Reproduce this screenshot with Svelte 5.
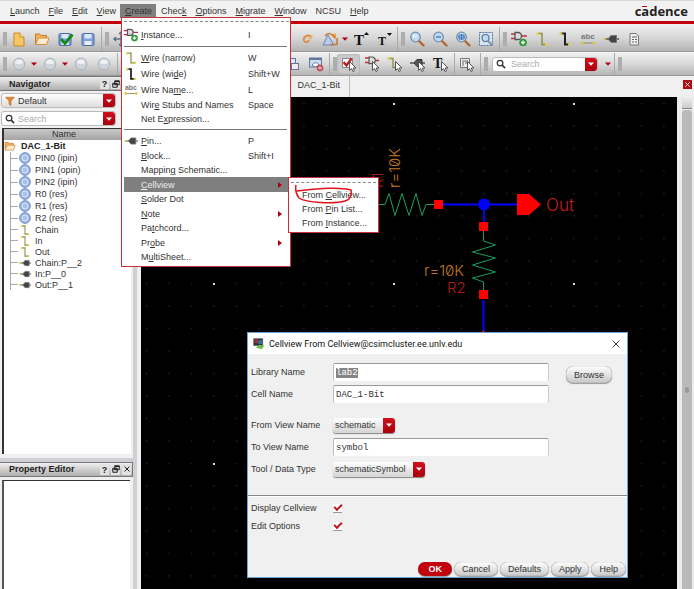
<script lang="ts">
  import { onMount } from "svelte";

  // "_" marks the mnemonic letter of an entry.
  const menubar = [
    "_Launch", "_File", "_Edit", "_View", "_Create", "Chec_k",
    "_Options", "_Migrate", "_Window", "NCSU", "_Help",
  ];

  const createMenu = [
    { label: "_Instance...", key: "I", icon: "instance" },
    { divider: true },
    { label: "_Wire (narrow)", key: "W", icon: "wire" },
    { label: "Wire (wi_de)", key: "Shift+W", icon: "wirewide" },
    { label: "Wire Na_me...", key: "L", icon: "abc" },
    { label: "Wir_e Stubs and Names", key: "Space" },
    { label: "Net E_xpression..." },
    { divider: true },
    { label: "_Pin...", key: "P", icon: "pin" },
    { label: "_Block...", key: "Shift+I" },
    { label: "Mappin_g Schematic..." },
    { label: "_Cellview", arrow: true, open: true },
    { label: "_Solder Dot" },
    { label: "_Note", arrow: true },
    { label: "Pa_tchcord..." },
    { label: "Pr_obe", arrow: true },
    { label: "M_ultiSheet..." },
  ];

  const cellviewMenu = ["From _Cellview...", "From _Pin List...", "From _Instance..."];

  const mainTools = [
    "grip", "new", "open", "check", "save", "end",
    "grip", "move", "covered",
    "undo", "rotate", "drop", "bigger", "smaller", "end",
    "grip", "zoomin", "zoomout", "zoomfit", "zoomsel", "end",
    "grip", "instance", "wire", "wirewide", "abc", "pin", "sheet",
  ];

  const selectTools = [
    "grip", "ball", "drop", "ball", "drop", "ball", "ball", "end", "covered",
    "copywin", "hide", "end",
    "grip", "selcheck", "selinst", "selwire", "selpin", "seltext", "end",
    "selsheet", "end", "grip",
  ];

  const tree = [
    { name: "PIN0 (ipin)", icon: "cell" },
    { name: "PIN1 (opin)", icon: "cell" },
    { name: "PIN2 (ipin)", icon: "cell" },
    { name: "R0 (res)", icon: "cell" },
    { name: "R1 (res)", icon: "cell" },
    { name: "R2 (res)", icon: "cell" },
    { name: "Chain", icon: "wire" },
    { name: "In", icon: "wire" },
    { name: "Out", icon: "wire" },
    { name: "Chain:P__2", icon: "pin" },
    { name: "In:P__0", icon: "pin" },
    { name: "Out:P__1", icon: "pin" },
  ];

  let library = $state("lab2");
  let cell = $state("DAC_1-Bit");
  let toView = $state("symbol");
  let display = $state(true);
  let edit = $state(true);
  let libraryInput: HTMLInputElement;

  onMount(() => {
    libraryInput.focus({ preventScroll: true });
    libraryInput.select();
  });
</script>

{#snippet mnemonic(text)}
  {@const at = text.indexOf("_")}
  {#if at < 0}<span>{text}</span>{:else}<span>{text.slice(0, at)}<u>{text[at + 1]}</u>{text.slice(at + 2)}</span>{/if}
{/snippet}

{#snippet cursor()}
  <path d="M8.500 5.500v9l2-2 1.500 3 1.500-.8-1.400-2.700h2.900z" fill="#fff" stroke="#444" stroke-width=".9" />
{/snippet}

{#snippet lens()}
  <path d="M10 10l4.500 4.500" stroke="#b5652a" stroke-width="2.400" stroke-linecap="round" />
  <circle cx="6.500" cy="6" r="4.800" fill="#bcdcf5" stroke="#7c8ea3" stroke-width="1.300" />
{/snippet}

{#snippet icon(name)}
  <svg class="icon" viewBox="0 0 16 16" aria-hidden="true">
    {#if name === "new"}
      <path d="M3 2h6l4 4v9H3z" fill="#f7c667" stroke="#c98a22" />
      <path d="M9 2v4h4" fill="#fff0c4" stroke="#c98a22" />
    {:else if name === "open"}
      <path d="M1.500 13V3h4l1.500 1.500h5.500V7" fill="#f2b35c" stroke="#c47a22" />
      <path d="M1.500 13.500L4.500 7H15l-2.500 6.500z" fill="#fdebcf" stroke="#d58f38" />
    {:else if name === "save" || name === "check"}
      <rect x="2" y="2.500" width="12" height="12" rx="1.500" fill="#7d9fd6" stroke="#4c6aa5" />
      <rect x="4.500" y="3" width="7" height="4.500" fill="#dce8fa" />
      <rect x="4.500" y="10" width="7" height="4" fill="#e9eef5" />
      {#if name === "check"}
        <path d="M4 8l4 4.500 7.500-9" fill="none" stroke="#148a22" stroke-width="2.800" />
      {/if}
    {:else if name === "move"}
      <path d="M8 1v14M1 8h14M6 3l2-2 2 2M6 13l2 2 2-2M3 6L1 8l2 2M13 6l2 2-2 2" fill="none" stroke="#5c6f8c" stroke-width="1.400" />
    {:else if name === "undo"}
      <path d="M12 5C8 3.500 4 6 5 9.500c1 2.500 5 2 4.500-.5" fill="none" stroke="#dc8f48" stroke-width="2" />
      <path d="M9 7l5-3-2 5z" fill="#efb06a" />
    {:else if name === "rotate"}
      <path d="M1 14L6 4l6 10z" fill="#b9cdeb" stroke="#6a86b5" />
      <path d="M8 3.500l6-1v6" fill="#f0a23c" />
      <path d="M3 5c3-4 7-3 10 2M15 7v6.500H8" fill="none" stroke="#c77a3c" stroke-width="1.500" />
    {:else if name === "bigger"}
      <path d="M11 4l2.500-3L16 4z" fill="#111" />
      <text x="1" y="14" font-size="15">T</text>
    {:else if name === "smaller"}
      <path d="M11 2h5l-2.500 3z" fill="#111" />
      <text x="2" y="14" font-size="12">T</text>
    {:else if name === "zoomin"}
      {@render lens()}
      <path d="M4 5h4M5 3l-1 2 1 2" fill="none" stroke="#fff" />
    {:else if name === "zoomout"}
      {@render lens()}
      <path d="M4 6h5" stroke="#4b7cb8" stroke-width="1.400" />
    {:else if name === "zoomfit"}
      {@render lens()}
      <path d="M4 4h5v4H4zM6.500 3v6M3 6h7" fill="none" stroke="#3c75b8" />
    {:else if name === "zoomsel"}
      <rect x="1.500" y="1.500" width="13" height="13" fill="#d6e4f2" stroke="#51729a" stroke-dasharray="2 1" />
      <circle cx="7.500" cy="7" r="3.500" fill="#bcdcf5" stroke="#5b7593" stroke-width="1.200" />
      <path d="M10 10l4 4" stroke="#7c8fa8" stroke-width="2" />
    {:else if name === "instance"}
      <path d="M0 3h4M0 7.500h4M9 5h7" stroke="#c0303c" stroke-width="1.500" />
      <path d="M4 1.500h3a3.500 3.500 0 010 7H4z" fill="#ddd" stroke="#555" stroke-width="1.300" />
      <circle cx="12" cy="11.500" r="3.800" fill="#2d9a38" />
      <path d="M10 11.500h4M12 9.500v4" stroke="#fff" stroke-width="1.400" />
    {:else if name === "wire" || name === "wirewide"}
      <path d="M4 2.500h4v11h4" fill="none" stroke={name === "wire" ? "#8c8c42" : "#222"} stroke-width={name === "wire" ? 1.400 : 2} />
      <circle cx="3.800" cy="2.700" r="1.500" fill="#e0d050" />
      <circle cx="12.400" cy="13.400" r="1.500" fill="#e0d050" />
    {:else if name === "abc"}
      <text class="abc" x="1" y="8" font-size="8">abc</text>
      <path d="M2 12h12" stroke="#8c8c62" />
      <circle cx="2" cy="12" r="1.600" fill="#dccb4a" />
      <circle cx="14" cy="12" r="1.600" fill="#dccb4a" />
    {:else if name === "pin"}
      <path d="M1 8h5M13 8h3" stroke="#555" stroke-width="1.400" />
      <path d="M5 8l3-3.500h5.500v7H8z" fill="#444" stroke="#777" />
      <circle cx="1.800" cy="8" r="1.300" fill="#d8ca4c" />
    {:else if name === "sheet"}
      <path d="M4 2.500h6l2.500 2.500v9H4z" fill="#eee" stroke="#777" />
      <path d="M6 6h5M6 8.500h2M9 8.500h2M6 11h2M9 11h2" stroke="#666" />
    {:else if name === "ball"}
      <circle cx="8" cy="8" r="5.800" fill="#cfd3da" stroke="#aeb2ba" />
      <path d="M4 7a4 3.500 0 018 0c-2 1.500-6 1.500-8 0z" fill="#eff1f5" />
    {:else if name === "cell"}
      <circle cx="8" cy="8" r="7.300" fill="#8ba8dc" stroke="#6f8cc4" />
      <circle cx="8" cy="8" r="4.200" fill="#a9c0ea" stroke="#e6eefb" stroke-width="1.300" />
    {:else if name === "copywin"}
      <rect x="1.500" y="2.500" width="9" height="8" fill="#dde7f5" stroke="#60779c" />
      <rect x="6.500" y="7.500" width="7" height="6" fill="#eee" stroke="#60779c" />
    {:else if name === "hide"}
      <rect x="1.500" y="2" width="12" height="9" fill="#cddcf0" stroke="#60779c" />
      <path d="M1.500 3h12" stroke="#60779c" stroke-width="2" />
      <path d="M4 9c2-3 5-3 7 0-2 2-5 2-7 0z" fill="#fff" stroke="#60779c" />
      <circle cx="12" cy="12" r="3" fill="#d0636b" stroke="#b8454e" />
      <path d="M10.500 12h3" stroke="#fff" />
    {:else if name === "selcheck"}
      <rect x="1.500" y="2.500" width="10" height="9" fill="#fff" stroke="#888" />
      <path d="M2.500 6l3 3.500 5-7" fill="none" stroke="#c4101c" stroke-width="2.200" />
      {@render cursor()}
    {:else if name === "selinst"}
      <path d="M1 2h4M1 6.500h4M10 4.500h5" stroke="#c52a35" stroke-width="1.300" />
      <path d="M5 1h3a3.300 3.300 0 010 6.600H5z" fill="#ddd" stroke="#555" stroke-width="1.200" />
      {@render cursor()}
    {:else if name === "selwire"}
      <path d="M1 2.500h5v9h3" fill="none" stroke="#8c8c42" stroke-width="1.300" />
      <circle cx="1.800" cy="2.500" r="1.400" fill="#e0d050" />
      {@render cursor()}
    {:else if name === "selpin"}
      <path d="M0 7h5M12 7h3" stroke="#555" stroke-width="1.300" />
      <path d="M4 7l3-3.500h5v7H7z" fill="#555" stroke="#333" />
      {@render cursor()}
    {:else if name === "seltext"}
      <text x="0" y="12" font-size="14">T</text>
      {@render cursor()}
    {:else if name === "selsheet"}
      <path d="M1.500 2.500h9v9h-9z" fill="#eee" stroke="#777" />
      <path d="M3 5h6M3 7h2M6 7h3M3 9h2" stroke="#666" />
      {@render cursor()}
    {:else if name === "lens"}
      <circle cx="6.500" cy="6.500" r="4.500" fill="none" stroke="#333" stroke-width="2" />
      <path d="M9.500 9.500l5 5" stroke="#333" stroke-width="2.600" />
    {:else if name === "funnel"}
      <path d="M1 2h14l-5.500 6v7l-3-2V8z" fill="#e58a35" stroke="#b9611a" />
    {:else if name === "down"}
      <path d="M2 5h12l-6 6.500z" fill="currentColor" />
    {:else if name === "float"}
      <path d="M5.500 1.500h9v8h-9zM5.500 3h9M1.500 6.500h9v8h-9zM1.500 8h9" fill="#ddd" stroke="#222" stroke-width="2" />
    {:else if name === "close"}
      <path d="M3 3l10 10M13 3L3 13" stroke="currentColor" stroke-width="2" />
    {:else if name === "cross"}
      <path d="M2.500 2.500l11 11M13.500 2.500l-11 11" stroke="currentColor" stroke-width="1.300" />
    {:else if name === "app"}
      <rect x="1" y="1" width="12" height="9" fill="#24303c" stroke="#59636d" />
      <path d="M2 2h5v5H2z" fill="#a33434" />
      <path d="M7 3h5v5H7z" fill="#3c6ba6" />
      <path d="M4 13l4-4 7 1-3 5z" fill="#6cc04a" />
    {/if}
  </svg>
{/snippet}

{#snippet tools(names)}
  {#each names as name}
    {#if name === "grip" || name === "end" || name === "covered"}
      <span class={name}></span>
    {:else}
      <button class="tool" class:drop={name === "drop"} class:pressed={name === "selcheck"} aria-label={name}>
        {@render icon(name === "drop" ? "down" : name)}
      </button>
    {/if}
  {/each}
{/snippet}

{#snippet dock(title)}
  <header class="dock">
    <h2>{title}</h2>
    <button aria-label="Help">?</button>
    <button aria-label="Float">{@render icon("float")}</button>
    <button aria-label="Close">{@render icon("close")}</button>
  </header>
{/snippet}

<div class="app">
  <nav class="menubar">
    {#each menubar as entry}
      <div class="entry">
        <button class="top" class:active={entry === "_Create"}>{@render mnemonic(entry)}</button>
        {#if entry === "_Create"}
          <ul class="menu create">
            <li class="tear"></li>
            {#each createMenu as item}
              {#if item.divider}
                <li class="divider"></li>
              {:else}
                <li>
                  <button class="item" class:tall={item.icon} class:parent={item.arrow} class:open={item.open}>
                    <span class="slot">{#if item.icon}{@render icon(item.icon)}{/if}</span>
                    <span class="name">{@render mnemonic(item.label)}</span>
                    <span class="key">{item.key ?? ""}</span>
                    {#if item.arrow}<span class="more"></span>{/if}
                  </button>
                  {#if item.open}
                    <ul class="menu sub">
                      <li class="tear"></li>
                      {#each cellviewMenu as view}
                        <li><button class="item">{@render mnemonic(view)}</button></li>
                      {/each}
                      <li class="mark" aria-hidden="true">
                        <svg viewBox="0 0 60 24">
                          <path d="M2 1c-1 5 0 9 3 13 7 5 36 6 46 3 5-1 7-6 6-11-9-3-34-2-54 1" />
                        </svg>
                      </li>
                    </ul>
                  {/if}
                </li>
              {/if}
            {/each}
          </ul>
        {/if}
      </div>
    {/each}
    <strong class="brand">c<span>a</span>dence</strong>
  </nav>

  <div class="toolbar">{@render tools(mainTools)}</div>
  <div class="toolbar second">
    {@render tools(selectTools)}
    <div class="combo find">
      {@render icon("lens")}
      <input aria-label="Search tools" placeholder="Search" />
      <button class="red" aria-label="Search options">{@render icon("down")}</button>
    </div>
    {@render tools(["drop", "end", "grip"])}
  </div>

  <div class="work">
    <aside>
      <section class="navigator">
        {@render dock("Navigator")}
        <div class="filters">
          <div class="combo">
            {@render icon("funnel")}
            <select aria-label="Filter"><option>Default</option></select>
            <button class="red" aria-label="Filters">{@render icon("down")}</button>
          </div>
          <div class="combo plain">
            {@render icon("lens")}
            <input aria-label="Search objects" placeholder="Search" />
            <button class="red" aria-label="Search history">{@render icon("down")}</button>
          </div>
        </div>
        <div class="tree">
          <div class="column">Name</div>
          <div class="root">{@render icon("open")}DAC_1-Bit</div>
          <ul>
            {#each tree as node}
              <li class:cell={node.icon === "cell"}>{@render icon(node.icon)}{node.name}</li>
            {/each}
          </ul>
        </div>
      </section>
      <section class="property">
        {@render dock("Property Editor")}
        <div class="blank"></div>
      </section>
    </aside>

    <main>
      <div class="tabs">
        <button class="tab">DAC_1-Bit</button>
        <button class="shut" aria-label="Close tab">{@render icon("close")}</button>
      </div>
      <div class="view">
        <div class="canvas">
          <svg aria-label="Schematic">
            <defs>
              <pattern id="minor" x="-6" y="-5" width="22.500" height="22.500" patternUnits="userSpaceOnUse">
                <rect x="11" y="11" width="1" height="1" fill="#4a4a4a" />
              </pattern>
              <pattern id="major" x="-18" y="-84" width="180" height="180" patternUnits="userSpaceOnUse">
                <rect x="90" y="90" width="2" height="2" fill="#ddd" />
              </pattern>
            </defs>
            <rect width="100%" height="100%" fill="url(#minor)" />
            <rect width="100%" height="100%" fill="url(#major)" />
            <g class="net">
              <path d="M302 107.500h75M343 107.500v22M342.500 203v60" />
              <circle cx="343" cy="107.500" r="6" />
            </g>
            <g class="part">
              <path d="M230 107.500h14l4-11 6 22 7-22 7 22 7-22 6 22 4-11h8" />
              <path d="M342.500 134v10l12 4-23 7 23 6-23 7 23 7-23 6 11 4v8" />
            </g>
            <g class="terminal">
              <rect x="293" y="103" width="9" height="9" />
              <rect x="338" y="125" width="9" height="9" />
              <rect x="338" y="193" width="9" height="9" />
              <path d="M376 97h12l12 10.500-12 10.500h-12zM341 235l1.500-2 1.500 2z" />
            </g>
            <text class="net-name" x="405" y="114">Out</text>
            <text class="ref" x="306" y="196">R2</text>
            <text class="value" x="283" y="179">r=10K</text>
            <text class="ref" transform="translate(242 91) rotate(-90)">R1</text>
            <text class="value" transform="translate(259 91) rotate(-90)">r=10K</text>
          </svg>
        </div>
        <div class="scroll"><span class="cap"></span><span class="thumb"></span></div>
      </div>
    </main>
  </div>

  <form class="dialog" aria-labelledby="dialog-title" onsubmit={(e) => e.preventDefault()}>
    <header>
      {@render icon("app")}
      <h1 id="dialog-title">Cellview From Cellview@csimcluster.ee.unlv.edu</h1>
      <button type="button" aria-label="Close">{@render icon("cross")}</button>
    </header>
    <div class="fields">
      <div class="row">
        <label for="library">Library Name</label>
        <input id="library" bind:value={library} bind:this={libraryInput} />
        <button type="button" class="pill browse">Browse</button>
      </div>
      <div class="row">
        <label for="cell">Cell Name</label>
        <input id="cell" bind:value={cell} />
      </div>
      <div class="row spaced">
        <label for="from">From View Name</label>
        <div class="choice">
          <select id="from"><option>schematic</option></select>
          <span class="red">{@render icon("down")}</span>
        </div>
      </div>
      <div class="row">
        <label for="to">To View Name</label>
        <input id="to" bind:value={toView} />
      </div>
      <div class="row">
        <label for="tool">Tool / Data Type</label>
        <div class="choice">
          <select id="tool"><option>schematicSymbol</option></select>
          <span class="red">{@render icon("down")}</span>
        </div>
      </div>
    </div>
    <div class="options">
      <div class="row">
        <label for="display">Display Cellview</label>
        <input id="display" type="checkbox" bind:checked={display} />
      </div>
      <div class="row">
        <label for="edit">Edit Options</label>
        <input id="edit" type="checkbox" bind:checked={edit} />
      </div>
    </div>
    <footer>
      <button class="pill ok">OK</button>
      <button type="button" class="pill">Cancel</button>
      <button type="button" class="pill">Defaults</button>
      <button type="button" class="pill">Apply</button>
      <button type="button" class="pill">Help</button>
    </footer>
  </form>
</div>

<style>
  :global(body) {
    background: #f0f0f0;
  }

  .app {
    position: relative;
    display: flex;
    flex-direction: column;
    min-height: 100vh;
    overflow: hidden;
    color: #333;
    font: 9px/12px "Liberation Sans", Arial, sans-serif;
  }

  .app *,
  .app *::before {
    box-sizing: border-box;
  }

  button,
  input,
  select {
    min-width: 0;
    margin: 0;
    padding: 0;
    border: 0;
    outline: none;
    color: inherit;
    font: inherit;
    background: none;
  }

  select {
    appearance: none;
  }

  ul {
    margin: 0;
    padding: 0;
    list-style: none;
  }

  h1,
  h2 {
    margin: 0;
    font-size: 9px;
  }

  u {
    text-underline-offset: 1px;
  }

  .icon {
    display: block;
    flex: none;
    width: 16px;
    height: 16px;
    overflow: visible;
  }

  .icon text {
    font-family: "Liberation Serif", serif;
    font-weight: bold;
    fill: #111;
  }

  .icon .abc {
    font-family: "Liberation Sans", sans-serif;
    fill: #777;
  }

  /* Menu bar */
  .menubar {
    display: flex;
    align-items: flex-end;
    height: 24px;
    padding-left: 5px;
    padding-right: 6px;
    border-top: 1px solid #d8d8d8;
    border-bottom: 3px solid #c4000c;
    background: #f2f2f2;
  }

  .entry {
    position: relative;
    align-self: stretch;
    padding-top: 3px;
  }

  .top {
    display: block;
    height: 14px;
    padding: 0 4px 0 5px;
  }

  .top.active {
    background: #7f7f7f;
    color: #333;
  }

  .brand {
    margin-left: auto;
    color: #222;
    font: bold 13px/20px "Open Sans", sans-serif;
  }

  .brand span {
    position: relative;
  }

  .brand span::before {
    content: "";
    position: absolute;
    top: 4px;
    left: 1px;
    width: 5px;
    height: 1px;
    background: #c4000c;
  }

  .menu {
    position: absolute;
    z-index: 3;
    border: 1px solid #c8303a;
    background: #fff;
  }

  .create {
    top: 16px;
    left: 1px;
    width: 170px;
    padding: 3px 1px 2px 2px;
  }

  .create > li {
    position: relative;
  }

  .tear {
    height: 6px;
    border-top: 1px dashed #888;
  }

  .divider {
    height: 1px;
    margin: 3px 2px 3px 0;
    background: #777;
  }

  .item {
    display: flex;
    align-items: center;
    width: 100%;
    height: 14px;
    text-align: left;
  }

  .item.tall {
    height: 16px;
  }

  .item.parent {
    height: 15px;
  }

  .item.open {
    background: #7f7f7f;
    color: #eee;
  }

  .slot {
    width: 17px;
  }

  .slot .icon {
    width: 14px;
    height: 14px;
  }

  .name {
    width: 107px;
    white-space: nowrap;
  }

  .key {
    flex: 1;
  }

  .more {
    margin-right: 7px;
    border: 3px solid transparent;
    border-left: 4px solid #b00010;
    border-right: 0;
  }

  .sub {
    top: 0;
    left: 164px;
    width: 91px;
    padding: 4px 2px 2px;
    color: #333;
  }

  .sub .item {
    padding-left: 11px;
    white-space: nowrap;
  }

  /* Hand-drawn ring round the first entry */
  .mark {
    position: absolute;
    top: 6px;
    left: 5px;
    width: 60px;
    height: 24px;
    pointer-events: none;
  }

  .mark path {
    fill: none;
    stroke: #e0141c;
    stroke-width: 1.5;
  }

  /* Toolbars */
  .toolbar {
    display: flex;
    align-items: center;
    height: 28px;
    padding-top: 3px;
    border-bottom: 1px solid #999;
    background: linear-gradient(#f0f0f0, #d8d8d8 50%, #b4b4b4);
  }

  .toolbar.second {
    height: 24px;
    padding-top: 0;
    border-top: 1px solid #f4f4f4;
  }

  .grip {
    flex: none;
    width: 7px;
    height: 14px;
    border-left: 3px solid transparent;
    background: #adadad padding-box;
  }

  .end {
    flex: none;
    align-self: stretch;
    width: 3px;
    border-right: 1px solid #aaa;
  }

  .covered {
    flex: none;
    width: 163px;
  }

  .tool {
    display: grid;
    place-items: center;
    flex: none;
    width: 23px;
    height: 20px;
  }

  .tool.drop {
    width: 8px;
    color: #b00010;
  }

  .drop .icon {
    width: 8px;
    height: 8px;
  }

  .tool.pressed {
    border-radius: 3px;
    background: #cacaca;
    box-shadow: inset 0 0 2px #999;
  }

  .combo {
    display: flex;
    align-items: center;
    height: 15px;
    padding-left: 3px;
    border: 1px solid #bbb;
    border-radius: 3px;
    background: linear-gradient(#fff, #ddd);
  }

  .combo.plain,
  .combo.find {
    background: #fff;
  }

  .combo .icon {
    width: 10px;
    height: 10px;
  }

  .combo input,
  .combo select {
    flex: 1;
    padding-left: 3px;
  }

  input::placeholder {
    color: #aaa;
    opacity: 1;
  }

  .find {
    width: 106px;
    margin: 0 6px 0 4px;
  }

  .find input {
    padding-left: 5px;
  }

  .red {
    display: grid;
    place-items: center;
    align-self: stretch;
    flex: none;
    width: 12px;
    border-radius: 0 3px 3px 0;
    background: linear-gradient(#d0101c, #a8000c);
    color: #fff;
  }

  .red .icon {
    width: 8px;
    height: 8px;
  }

  /* Work area */
  .work {
    display: flex;
    flex: 1;
  }

  aside {
    display: flex;
    flex-direction: column;
    flex: none;
    width: 137px;
    border-right: 4px solid #cfcfd4;
  }

  .navigator {
    display: flex;
    flex-direction: column;
    flex: 3;
  }

  .property {
    display: flex;
    flex-direction: column;
    flex: 1;
    border-top: 4px solid #cfcfd4;
  }

  .dock {
    display: flex;
    align-items: center;
    gap: 2px;
    height: 15px;
    padding: 0 1px 0 9px;
    border: 1px solid #777;
    border-left: 0;
    background: linear-gradient(#eee, #b0b0b0);
    color: #222;
  }

  .dock h2 {
    flex: 1;
  }

  .dock button {
    display: grid;
    place-items: center;
    width: 9px;
    height: 11px;
    background: #e2e2e2;
    font-weight: bold;
  }

  .dock .icon {
    width: 8px;
    height: 8px;
  }

  .filters {
    display: flex;
    flex-direction: column;
    gap: 3px;
    width: 116px;
    padding: 2px 0 2px 1px;
  }

  .tree {
    flex: 1;
    margin: 0 2px 4px;
    border-top: 1px solid #333;
    border-left: 2px solid #333;
    background: #fff;
  }

  .column {
    height: 11px;
    padding-right: 7px;
    background: linear-gradient(#c8c8c8, #a4a4a4);
    line-height: 11px;
    text-align: center;
  }

  .root {
    display: flex;
    align-items: center;
    gap: 5px;
    height: 12px;
    color: #222;
    font-weight: bold;
  }

  .tree .icon {
    width: 12px;
    height: 12px;
  }

  .tree ul {
    margin-left: 6px;
    border-left: 1px solid #aaa;
  }

  .tree li {
    display: flex;
    align-items: center;
    gap: 4px;
    height: 11px;
  }

  .tree li.cell {
    height: 12px;
  }

  .tree li::before {
    content: "";
    width: 7px;
    margin-right: -3px;
    border-top: 1px solid #aaa;
  }

  .blank {
    flex: 1;
    margin: 3px 3px 0 2px;
    border-top: 1px solid #333;
    border-left: 2px solid #555;
    background: #fff;
  }

  main {
    display: flex;
    flex-direction: column;
    flex: 1;
    min-width: 0;
  }

  .tabs {
    display: flex;
    align-items: center;
    justify-content: space-between;
    height: 21px;
    padding-right: 2px;
  }

  .tab {
    align-self: stretch;
    width: 213px;
    padding: 0 9px 3px 0;
    border-right: 1px solid #bbb;
    text-align: right;
  }

  .shut {
    display: grid;
    place-items: center;
    width: 9px;
    height: 9px;
    margin-bottom: 4px;
    background: #b00c16;
    color: #fff;
  }

  .shut .icon {
    width: 7px;
    height: 7px;
  }

  .view {
    display: flex;
    flex: 1;
    padding-left: 4px;
  }

  .canvas {
    position: relative;
    flex: 1;
    background: #000;
  }

  .canvas svg {
    position: absolute;
    width: 100%;
    height: 100%;
  }

  .net {
    fill: #00f;
    stroke: #00f;
    stroke-width: 2;
  }

  .net circle {
    stroke: none;
  }

  .part {
    fill: none;
    stroke: #1c9e60;
  }

  .terminal {
    fill: #f00;
  }

  .canvas text {
    font: 300 15px Inter, sans-serif;
    font-feature-settings: "zero";
  }

  .canvas .net-name {
    fill: #c81e1e;
    font-size: 17px;
  }

  .ref {
    fill: #b01c1c;
  }

  .value {
    fill: #c47a24;
  }

  .scroll {
    display: flex;
    flex-direction: column;
    width: 17px;
    padding: 0 2px 0 5px;
    background: #ececec;
  }

  .cap {
    height: 12px;
    border-bottom: 1px solid #888;
    background: linear-gradient(#eee, #ccc);
  }

  .thumb {
    display: grid;
    place-items: center;
    flex: 1;
    margin-top: 1px;
    border-radius: 3px 3px 0 0;
    background: #bababa;
  }

  .thumb::before {
    content: "";
    width: 4px;
    height: 6px;
    margin-top: 80px;
    border-radius: 2px;
    background: #999;
  }

  /* Dialog window */
  .dialog {
    position: absolute;
    top: 332px;
    left: 247px;
    width: 381px;
    border: 1px solid #69a5d8;
    background: #f0f0f0;
  }

  .dialog header {
    display: flex;
    align-items: center;
    gap: 4px;
    height: 21px;
    padding: 0 6px 0 5px;
    background: #fff;
    color: #111;
  }

  .dialog h1 {
    flex: 1;
    font: 9px/12px Roboto, sans-serif;
  }

  .dialog header .icon {
    width: 12px;
    height: 12px;
  }

  .dialog header button .icon {
    width: 10px;
    height: 10px;
  }

  .fields {
    padding: 7px 3px 15px;
    border-bottom: 1px solid #888;
  }

  .row {
    display: flex;
    align-items: center;
    height: 22px;
  }

  .row.spaced {
    margin-top: 9px;
  }

  .row label {
    flex: none;
    width: 82px;
  }

  .fields input {
    width: 216px;
    height: 18px;
    padding-left: 2px;
    border-top: 1px solid #999;
    border-left: 1px solid #bbb;
    border-right: 1px solid #ccc;
    border-radius: 2px;
    background: #fff;
    font-family: "Liberation Mono", monospace;
  }

  input::selection {
    background: #858585;
    color: #fff;
  }

  .choice {
    display: flex;
    height: 15px;
    border-radius: 3px;
    box-shadow: 0 1px 1px #888;
    background: linear-gradient(#fff, #d4d4d4);
  }

  .choice select {
    padding: 0 7px 0 2px;
  }

  .options {
    padding: 2px 3px 27px;
    border-top: 1px solid #fff;
  }

  .options .row {
    height: 18px;
  }

  .options input {
    appearance: none;
    width: 9px;
    height: 9px;
    border-bottom: 1px solid #999;
    background: #fff;
  }

  .options input:checked::before {
    content: "";
    display: block;
    width: 8px;
    height: 5px;
    margin-left: 1px;
    border-left: 2px solid #c4101c;
    border-bottom: 2px solid #c4101c;
    rotate: -45deg;
  }

  .dialog footer {
    display: flex;
    justify-content: flex-end;
    gap: 2px;
    padding: 0 1px 1px;
  }

  .pill {
    height: 14px;
    padding: 0 8px;
    border-radius: 7px;
    background: linear-gradient(#fff, #c8c8c8);
    box-shadow: inset 0 0 1px #555, 0 1px 1px #999;
    line-height: 14px;
  }

  .pill.ok {
    padding: 0 10px;
    background: #c4000c;
    color: #fff;
    font-weight: bold;
  }

  .browse {
    height: 17px;
    margin: 5px 0 0 17px;
  }
</style>
